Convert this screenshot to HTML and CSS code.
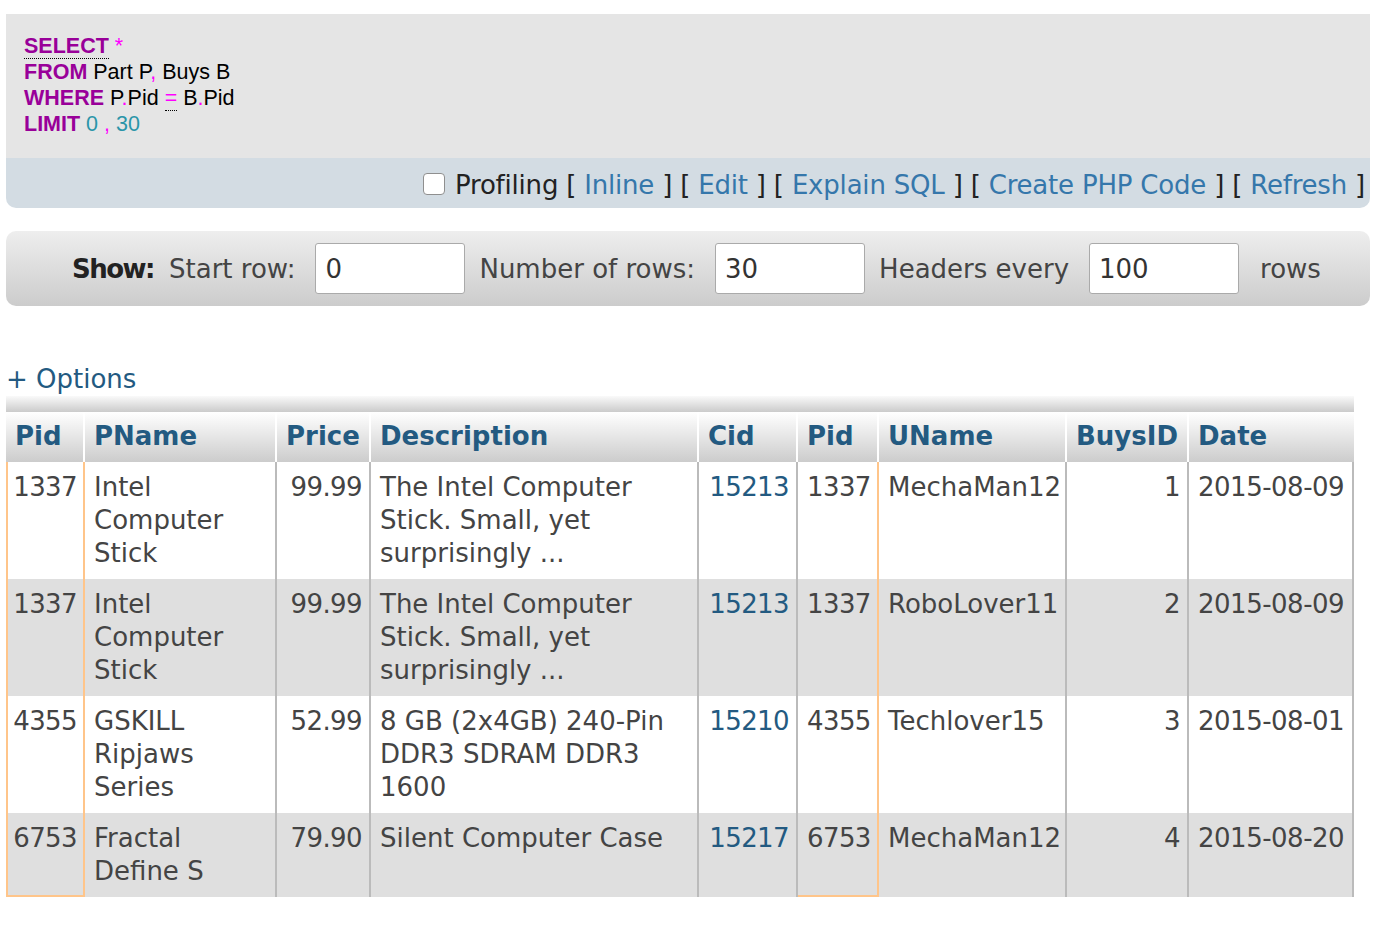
FILE: index.html
```html
<!DOCTYPE html>
<html lang="en">
<head>
<meta charset="utf-8">
<title>SQL result</title>
<link rel="stylesheet" href="styles.css">
</head>
<body class="page">
  <div class="sqlbox">
    <div class="sqlcode">
      <div class="sqlline"><span class="kw doc">SELECT</span> <span class="op">*</span></div>
      <div class="sqlline"><span class="kw">FROM</span> Part P<span class="op">,</span> Buys B</div>
      <div class="sqlline"><span class="kw">WHERE</span> P<span class="op">.</span>Pid <span class="op doc">=</span> B<span class="op">.</span>Pid</div>
      <div class="sqlline"><span class="kw">LIMIT</span> <span class="digit">0</span> <span class="op">,</span> <span class="digit">30</span></div>
    </div>
    <div class="sqltools">
      <input type="checkbox" class="check" aria-label="Profiling">
      <span class="tooltext">Profiling [ <a class="toollink" href="#">Inline</a> ] [ <a class="toollink" href="#">Edit</a> ] [ <a class="toollink" href="#">Explain SQL</a> ] [ <a class="toollink" href="#">Create PHP Code</a> ] [ <a class="toollink" href="#">Refresh</a> ]</span>
    </div>
  </div>

  <form class="navbar">
    <span class="show-label">Show:</span>
    <label class="nav-label">Start row:</label>
    <input class="nav-input" type="text" value="0">
    <label class="nav-label">Number of rows:</label>
    <input class="nav-input" type="text" value="30">
    <label class="nav-label">Headers every</label>
    <input class="nav-input" type="text" value="100">
    <span class="nav-rows">rows</span>
  </form>

  <div class="options"><a class="options-link" href="#">+ Options</a></div>

  <div class="strip"></div>
  <table class="results">
    <colgroup>
      <col class="c-pid"><col class="c-pname"><col class="c-price"><col class="c-desc"><col class="c-cid"><col class="c-pid2"><col class="c-uname"><col class="c-buys"><col class="c-date">
    </colgroup>
    <thead>
      <tr>
        <th>Pid</th><th>PName</th><th>Price</th><th>Description</th><th>Cid</th><th>Pid</th><th>UName</th><th>BuysID</th><th>Date</th>
      </tr>
    </thead>
    <tbody>
      <tr class="odd">
        <td class="num cond first">1337</td>
        <td>Intel Computer Stick</td>
        <td class="num">99.99</td>
        <td>The Intel Computer Stick. Small, yet surprisingly ...</td>
        <td class="num"><a class="fk" href="#">15213</a></td>
        <td class="num cond">1337</td>
        <td>MechaMan12</td>
        <td class="num">1</td>
        <td class="date">2015-08-09</td>
      </tr>
      <tr class="even">
        <td class="num cond first">1337</td>
        <td>Intel Computer Stick</td>
        <td class="num">99.99</td>
        <td>The Intel Computer Stick. Small, yet surprisingly ...</td>
        <td class="num"><a class="fk" href="#">15213</a></td>
        <td class="num cond">1337</td>
        <td>RoboLover11</td>
        <td class="num">2</td>
        <td class="date">2015-08-09</td>
      </tr>
      <tr class="odd">
        <td class="num cond first">4355</td>
        <td>GSKILL Ripjaws Series</td>
        <td class="num">52.99</td>
        <td>8 GB (2x4GB) 240-Pin DDR3 SDRAM DDR3 1600</td>
        <td class="num"><a class="fk" href="#">15210</a></td>
        <td class="num cond">4355</td>
        <td>Techlover15</td>
        <td class="num">3</td>
        <td class="date">2015-08-01</td>
      </tr>
      <tr class="even last">
        <td class="num cond first">6753</td>
        <td>Fractal Define S</td>
        <td class="num">79.90</td>
        <td>Silent Computer Case</td>
        <td class="num"><a class="fk" href="#">15217</a></td>
        <td class="num cond">6753</td>
        <td>MechaMan12</td>
        <td class="num">4</td>
        <td class="date">2015-08-20</td>
      </tr>
    </tbody>
  </table>
</body>
</html>
```

FILE: styles.css
```css
.page {
  margin: 0;
  padding: 14px 8px 40px 6px;
  font-family: "DejaVu Sans", "Noto Sans", sans-serif;
  font-size: 26px;
  line-height: 33px;
  color: #444;
  background: #fff;
}

/* SQL box */
.sqlbox {
  border-radius: 0 0 10px 10px;
  overflow: hidden;
}
.sqlcode {
  background: #e5e5e5;
  padding: 19px 18px 21px;
  font-family: "Liberation Sans", Arial, sans-serif;
  font-size: 21.5px;
  line-height: 26px;
  color: #000;
}
.sqlline { height: 26px; white-space: nowrap; }
.kw { color: #990099; font-weight: bold; }
.op { color: #ff00ff; }
.digit { color: #2a95a9; }
.doc { border-bottom: 1px dotted #000; }

.sqltools {
  background: #d3dce3;
  padding: 11px 5px 6px;
  display: flex;
  justify-content: flex-end;
  align-items: center;
  color: #222;
}
.check {
  appearance: none;
  -webkit-appearance: none;
  width: 22px;
  height: 22px;
  margin: 0 10px 4px 0;
  border: 1px solid #8f8f8f;
  border-radius: 4px;
  background: #fff;
}
.tooltext { white-space: nowrap; letter-spacing: -0.2px; }
.toollink { color: #3577ab; text-decoration: none; }

/* navigation bar */
.navbar {
  margin: 23px 0 0;
  height: 75px;
  box-sizing: border-box;
  padding: 13px 0 11px 66px;
  display: flex;
  align-items: center;
  background: linear-gradient(#eeeeee, #cccccc);
  border-radius: 10px;
  color: #444;
}
.show-label { font-weight: bold; color: #222; margin-right: 15px; letter-spacing: -1.5px; }
.nav-label { margin-right: 20px; }
.nav-input {
  box-sizing: border-box;
  width: 150px;
  height: 51px;
  margin: -2px 14px 0 0;
  padding: 0 9px;
  border: 1px solid #aaa;
  border-radius: 3px;
  background: #fff;
  font-family: "DejaVu Sans", sans-serif;
  font-size: 26px;
  color: #333;
}
.nav-rows { margin-left: 7px; }

/* options */
.options { margin-top: 57px; height: 33px; }
.options-link { color: #235a81; text-decoration: none; }

.strip {
  width: 1348px;
  height: 16px;
  background: linear-gradient(#fafafa, #cbcbcb);
}

/* results table */
.results {
  width: 1348px;
  table-layout: fixed;
  border-collapse: separate;
  border-spacing: 0;
}
.c-pid { width: 79px; }
.c-pname { width: 192px; }
.c-price { width: 94px; }
.c-desc { width: 328px; }
.c-cid { width: 99px; }
.c-pid2 { width: 81px; }
.c-uname { width: 188px; }
.c-buys { width: 122px; }
.c-date { width: 165px; }

.results th {
  padding: 8px 7px 9px 9px;
  text-align: left;
  font-weight: bold;
  color: #235a81;
  background: linear-gradient(#ffffff, #cccccc);
  border-right: 2px solid #fff;
  white-space: nowrap;
  overflow: hidden;
}
.results th:last-child { border-right: none; }
.results td {
  padding: 9px 7px 9px 9px;
  vertical-align: top;
  border-right: 2px solid #bbbbbb;
  color: #444;
}
.results td.num { text-align: right; letter-spacing: -0.6px; }
.results td.date { letter-spacing: -0.5px; white-space: nowrap; }
.results td.first { border-left: 2px solid #ffc58a; padding-left: 2px; padding-right: 6px; }
.results td.cond { border-right-color: #ffc58a; }
.results tr.last td.cond { border-bottom: 2px solid #ffc58a; }
.results tr.odd td { background: #ffffff; }
.results tr.even td { background: #dfdfdf; }
.fk { color: #235a81; text-decoration: none; }
```
